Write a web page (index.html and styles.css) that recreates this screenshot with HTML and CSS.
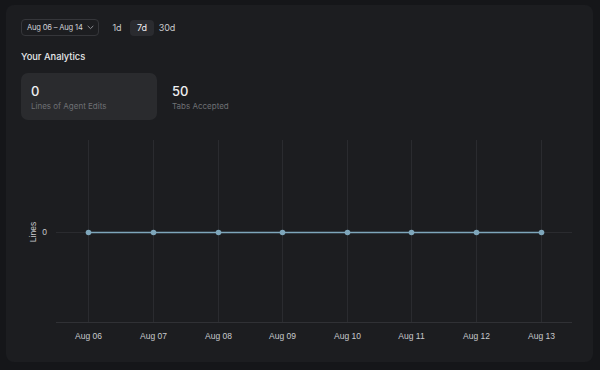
FILE: index.html
```html
<!DOCTYPE html>
<html lang="en">
<head>
  <meta charset="UTF-8">
  <meta name="viewport" content="width=device-width, initial-scale=1.0">
  <title>Your Analytics</title>
  <link rel="stylesheet" href="styles.css">
</head>
<body>
  <div class="panel">
    <div class="toolbar">
      <button class="date-select">
        <span class="date-text">Aug 06 – Aug 14</span>
        <svg class="chevron" width="7" height="5" viewBox="0 0 7 5"><path d="M1 1.2 L3.5 3.6 L6 1.2" fill="none" stroke="#9a9ba0" stroke-width="0.9" stroke-linecap="round" stroke-linejoin="round"/></svg>
      </button>
      <div class="ranges">
        <button class="range">1d</button>
        <button class="range active">7d</button>
        <button class="range">30d</button>
      </div>
    </div>

    <h2 class="section-title">Your Analytics</h2>

    <div class="stats">
      <div class="stat highlighted">
        <div class="stat-value">0</div>
        <div class="stat-label">Lines of Agent Edits</div>
      </div>
      <div class="stat">
        <div class="stat-value">50</div>
        <div class="stat-label">Tabs Accepted</div>
      </div>
    </div>

    <svg class="chart" width="557" height="220" viewBox="0 0 557 220">
      <!-- grid -->
      <g stroke="#2a2b2f" stroke-width="1">
        <line x1="67.5" y1="10" x2="67.5" y2="192"/>
        <line x1="132.5" y1="10" x2="132.5" y2="192"/>
        <line x1="197.5" y1="10" x2="197.5" y2="192"/>
        <line x1="261.5" y1="10" x2="261.5" y2="192"/>
        <line x1="326.5" y1="10" x2="326.5" y2="192"/>
        <line x1="390.5" y1="10" x2="390.5" y2="192"/>
        <line x1="455.5" y1="10" x2="455.5" y2="192"/>
        <line x1="520.5" y1="10" x2="520.5" y2="192"/>
        <line x1="35" y1="102.5" x2="551" y2="102.5"/>
      </g>
      <line x1="35" y1="192.5" x2="551" y2="192.5" stroke="#303135" stroke-width="1"/>

      <text class="axis-title" transform="translate(15 102) rotate(-90)" text-anchor="middle">Lines</text>
      <text class="axis-label" x="26" y="105" text-anchor="end">0</text>

      <!-- series -->
      <line x1="67.5" y1="102.5" x2="520.5" y2="102.5" stroke="#7ea6bb" stroke-width="1.6"/>
      <g fill="#7ea6bb">
        <circle cx="67.5" cy="102.5" r="2.8"/>
        <circle cx="132.5" cy="102.5" r="2.8"/>
        <circle cx="197.5" cy="102.5" r="2.8"/>
        <circle cx="261.5" cy="102.5" r="2.8"/>
        <circle cx="326.5" cy="102.5" r="2.8"/>
        <circle cx="390.5" cy="102.5" r="2.8"/>
        <circle cx="455.5" cy="102.5" r="2.8"/>
        <circle cx="520.5" cy="102.5" r="2.8"/>
      </g>

      <g class="axis-label" text-anchor="middle">
        <text x="67.5" y="209">Aug 06</text>
        <text x="132.5" y="209">Aug 07</text>
        <text x="197.5" y="209">Aug 08</text>
        <text x="261.5" y="209">Aug 09</text>
        <text x="326.5" y="209">Aug 10</text>
        <text x="390.5" y="209">Aug 11</text>
        <text x="455.5" y="209">Aug 12</text>
        <text x="520.5" y="209">Aug 13</text>
      </g>
    </svg>
  </div>
</body>
</html>
```

FILE: styles.css
```css
html, body {
  margin: 0;
  padding: 0;
}
body {
  background-color: #151619;
  font-family: Inter, "Noto Sans", sans-serif;
  color: #e4e5e7;
  width: 600px;
  height: 370px;
  overflow: hidden;
}
.panel {
  box-sizing: border-box;
  margin: 5px 7px 0 6px;
  height: 357px;
  padding: 14px 15px 12px;
  background-color: #1c1d20;
  border-radius: 8px;
}
button {
  font-family: inherit;
  cursor: pointer;
}
.toolbar {
  display: flex;
  align-items: center;
  gap: 6px;
  height: 17px;
}
.date-select {
  display: flex;
  align-items: center;
  gap: 4px;
  box-sizing: border-box;
  height: 17px;
  width: 78px;
  padding: 0 5px;
  background: transparent;
  border: 1px solid #35363a;
  border-radius: 4px;
  color: #cfd0d4;
  white-space: nowrap;
}
.date-text {
  font-size: 7.6px;
  letter-spacing: -0.2px;
}
.chevron {
  flex: none;
}
.ranges {
  display: flex;
  align-items: center;
  gap: 1px;
}
.range {
  height: 16px;
  width: 24px;
  padding: 0;
  background: transparent;
  border: none;
  border-radius: 4px;
  color: #c9cacd;
  font-size: 9px;
}
.range.active {
  background-color: #2a2b2f;
  color: #eeeff1;
}
.section-title {
  margin: 15px 0 0;
  font-size: 9.3px;
  line-height: 12px;
  font-weight: 500;
  color: #e6e7e9;
}
.stats {
  display: flex;
  gap: 5px;
  margin-top: 10px;
}
.stat {
  box-sizing: border-box;
  width: 136px;
  height: 47px;
  padding: 11px 10px;
  border-radius: 7px;
}
.stat.highlighted {
  background-color: #2a2b2e;
}
.stat-value {
  font-size: 13px;
  line-height: 15px;
  font-weight: 500;
  color: #eeeff1;
}
.stat-label {
  margin-top: 2px;
  font-size: 8px;
  line-height: 10px;
  color: #6e7074;
}
.chart {
  display: block;
  margin-top: 10px;
  overflow: visible;
}
.axis-label,
.axis-title {
  font-family: "Liberation Sans", Arial, sans-serif;
  font-size: 8.5px;
  fill: #c9cacd;
}
```
